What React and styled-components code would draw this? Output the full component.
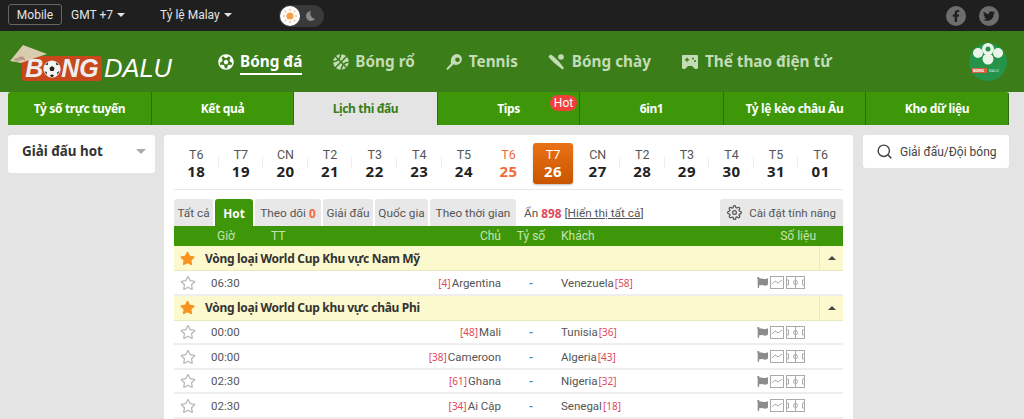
import React from 'react';
import styled, { createGlobalStyle } from 'styled-components';
import { FaFacebookF, FaTwitter, FaBasketballBall, FaFutbol, FaStar, FaRegStar, FaFlag } from 'react-icons/fa';
import { FiSearch, FiSettings } from 'react-icons/fi';

const FONT = 'Roboto, "Noto Sans", sans-serif';
const BOLD_FONT = '"Noto Sans", "DejaVu Sans", sans-serif';
const ROW_COLUMNS = '37px 60px 230px 60px 196px 86px';

const GlobalStyle = createGlobalStyle`
    html, body {
        margin: 0;
        padding: 0;
        background: #e4e4e4;
        font-family: ${FONT};
        overflow: hidden;
    }
    * {
        box-sizing: border-box;
    }
    b {
        font-family: ${BOLD_FONT};
    }
`;

const Page = styled.div`
    height: 419px;
    overflow: hidden;
    display: flex;
    flex-direction: column;
`;

const TopBar = styled.div`
    height: 31px;
    flex: none;
    background: #1f1f1f;
    display: flex;
    align-items: center;
    padding: 0 25px 2px 8px;
    color: #e4e4e4;
    font-size: 12px;
`;

const MobileButton = styled.div`
    width: 54px;
    height: 21px;
    border: 1px solid #666;
    border-radius: 3px;
    display: flex;
    align-items: center;
    justify-content: center;
    margin-right: 9px;
`;

const Dropdown = styled.div`
    display: flex;
    align-items: center;
    gap: 4px;
    width: ${(p) => p.width}px;
    white-space: nowrap;
`;

const Caret = styled.span`
    width: 0;
    height: 0;
    border-left: ${(p) => p.size || 4}px solid transparent;
    border-right: ${(p) => p.size || 4}px solid transparent;
    border-top: ${(p) => p.size || 4}px solid ${(p) => p.color || '#e4e4e4'};
    display: inline-block;
`;

const UpCaret = styled(Caret)`
    transform: rotate(180deg);
`;

const ThemeToggle = styled.div`
    width: 45px;
    height: 22px;
    border-radius: 11px;
    background: #3a3a3a;
    display: flex;
    align-items: center;
    padding: 0 1px;
    gap: 4px;
    margin-left: 49px;
    margin-top: 2px;
`;

const SunKnob = styled.div`
    width: 20px;
    height: 20px;
    border-radius: 50%;
    background: #fff;
    display: flex;
    align-items: center;
    justify-content: center;
`;

const Socials = styled.div`
    margin-left: auto;
    display: flex;
    gap: 13px;
    padding-top: 2px;
`;

const SocialIcon = styled.div`
    width: 20px;
    height: 20px;
    border-radius: 50%;
    background: #6d6d6d;
    color: #1f1f1f;
    display: flex;
    align-items: center;
    justify-content: center;
    font-size: 12px;
`;

const Header = styled.div`
    height: 61px;
    flex: none;
    background: #3a7d19;
    display: flex;
    align-items: center;
    padding: 0 17px 0 22px;
`;

const Logo = styled.div`
    position: relative;
    width: 150px;
    height: 25px;
    margin-top: 14px;
    margin-right: 46px;
    display: flex;
    align-items: center;
    font-size: 25.5px;
    font-style: italic;
    color: #fff;
    font-family: "Liberation Sans", sans-serif;
`;

const LogoBox = styled.div`
    width: 81px;
    height: 25px;
    background: #c9471c;
    border-radius: 3px;
    display: flex;
    align-items: center;
    justify-content: center;
    margin-right: 2px;
    color: #eee;
    font-size: 25px;
    font-weight: 700;
`;

const Hat = styled.svg`
    position: absolute;
    left: -13px;
    top: -12px;
`;

const SportNav = styled.div`
    display: flex;
    align-items: center;
    flex: 1;
`;

const SportItem = styled.div`
    display: flex;
    align-items: center;
    gap: 6px;
    margin-right: ${(p) => p.gap}px;
    color: ${(p) => (p.active ? '#fff' : '#c4dcb6')};
    font-family: ${BOLD_FONT};
    font-size: 15.3px;
    font-weight: 700;
    svg {
        font-size: 16px;
    }
`;

const SportLabel = styled.span`
    padding-bottom: 2px;
    border-bottom: 2px solid ${(p) => (p.active ? '#fff' : 'transparent')};
    margin-top: 3px;
`;

const Avatar = styled.svg`
    margin-top: 1px;
`;

const MainNav = styled.div`
    height: 33px;
    flex: none;
    margin: 0 15px 0 8px;
    display: grid;
    grid-template-columns: 144px 142px 144px 142px 144px 142px 143px;
    border-radius: 3px 3px 0 0;
    overflow: hidden;
`;

const MainNavItem = styled.div`
    position: relative;
    display: flex;
    align-items: center;
    justify-content: center;
    font-family: ${BOLD_FONT};
    font-size: 12px;
    letter-spacing: -0.35px;
    font-weight: 700;
    background: ${(p) => (p.active ? '#e4e4e4' : '#3d9708')};
    color: ${(p) => (p.active ? '#3a7d19' : '#fff')};
    border-right: 1px solid #2e6b14;
`;

const HotBadge = styled.span`
    position: absolute;
    right: 2px;
    top: 3px;
    width: 27px;
    height: 16px;
    border-radius: 8px;
    background: #f0403c;
    color: #fff;
    font-family: ${FONT};
    font-size: 12px;
    letter-spacing: 0;
    font-weight: 400;
    display: flex;
    align-items: center;
    justify-content: center;
`;

const Content = styled.div`
    flex: 1;
    padding: 10px 15px 0 8px;
    display: grid;
    grid-template-columns: 147px 689px 147px;
    gap: 9px;
    align-items: start;
`;

const LeaguePanel = styled.div`
    height: 38px;
    background: #fff;
    border-radius: 3px;
    display: flex;
    align-items: center;
    justify-content: space-between;
    padding: 0 9px 6px 14px;
    font-family: ${BOLD_FONT};
    font-size: 13.4px;
    font-weight: 700;
    color: #333;
`;

const MainPanel = styled.div`
    background: #fff;
    border-radius: 3px 3px 0 0;
    padding: 8px 10px 0;
    height: 300px;
`;

const SearchPanel = styled.div`
    height: 33px;
    margin-left: 1px;
    background: #fff;
    border-radius: 3px;
    display: flex;
    align-items: center;
    gap: 7px;
    padding: 0 13px;
    font-size: 12px;
    color: #444;
    white-space: nowrap;
    svg {
        font-size: 17px;
        flex: none;
    }
`;

const DateRow = styled.div`
    display: grid;
    grid-template-columns: repeat(15, 1fr);
    height: 47px;
    padding-bottom: 5px;
    border-bottom: 1px solid #e8e8e8;
`;

const DateItem = styled.div`
    position: relative;
    display: flex;
    flex-direction: column;
    align-items: center;
    justify-content: center;
    margin: 0 ${(p) => (p.active ? 2 : 0)}px;
    border-radius: 3px;
    font-size: 12.5px;
    line-height: 16px;
    color: ${(p) => (p.active ? '#fff' : p.weekend ? '#f26b38' : '#555')};
    background: ${(p) => (p.active ? 'linear-gradient(#ea7215, #c95500)' : 'transparent')};
    box-shadow: ${(p) => (p.active ? '0 1px 2px rgba(0, 0, 0, 0.25)' : 'none')};
    b {
        font-size: 15px;
        line-height: 17px;
        letter-spacing: 0.5px;
        color: ${(p) => (p.active ? '#fff' : p.weekend ? '#f26b38' : '#222')};
    }
    &::after {
        content: '';
        display: ${(p) => (p.noLine ? 'none' : 'block')};
        position: absolute;
        right: 0;
        top: 14px;
        width: 1px;
        height: 11px;
        background: #eee;
    }
`;

const Tabs = styled.div`
    display: flex;
    align-items: flex-end;
    gap: 2px;
    height: 27px;
    margin-top: 9px;
    font-size: 11.8px;
    color: #555;
`;

const Tab = styled.div`
    height: 27px;
    width: ${(p) => p.width}px;
    display: flex;
    align-items: center;
    justify-content: center;
    gap: 3px;
    background: ${(p) => (p.active ? '#3d9708' : '#e8e8e8')};
    color: ${(p) => (p.active ? '#fff' : '#555')};
    border-radius: 3px 3px 0 0;
    white-space: nowrap;
    b {
        color: ${(p) => (p.active ? '#fff' : '#f26b38')};
    }
`;

const HiddenInfo = styled.div`
    margin-left: 6px;
    display: flex;
    align-items: center;
    align-self: center;
    gap: 3px;
    b {
        color: #e0475a;
    }
    u {
        color: #555;
    }
`;

const SettingsButton = styled(Tab)`
    margin-left: auto;
    gap: 7px;
    font-size: 11.5px;
    svg {
        font-size: 15px;
    }
`;

const TableHead = styled.div`
    display: grid;
    grid-template-columns: ${ROW_COLUMNS};
    height: 20px;
    align-items: center;
    background: #3d9708;
    color: #c7e3b4;
    font-size: 12px;
`;

const HeadTime = styled.span`
    grid-column: 1 / 3;
    padding-left: 43px;
`;

const HeadHome = styled.span`
    display: flex;
    justify-content: space-between;
`;

const HeadScore = styled.span`
    text-align: center;
`;

const HeadStats = styled.span`
    grid-column: 5 / 7;
    display: flex;
    justify-content: space-between;
    padding-right: 27px;
`;

const LeagueRow = styled.div`
    height: 25px;
    background: #fbf9cd;
    border-bottom: 1px solid #e9e8c0;
    display: flex;
    align-items: center;
    color: #333;
    font-family: ${BOLD_FONT};
    font-size: 12px;
    letter-spacing: -0.3px;
    font-weight: 700;
`;

const LeagueStar = styled.span`
    width: 31px;
    padding-left: 6px;
    color: #f7931e;
    font-size: 15px;
    display: flex;
`;

const Collapse = styled.span`
    margin-left: auto;
    width: 24px;
    height: 24px;
    border-left: 1px solid #ebe9c4;
    display: flex;
    align-items: center;
    justify-content: center;
`;

const MatchRow = styled.div`
    display: grid;
    grid-template-columns: ${ROW_COLUMNS};
    height: 24.5px;
    align-items: center;
    padding-top: 1px;
    border-bottom: 2px solid #eee;
    font-size: 11.5px;
    color: #555;
`;

const StarCell = styled.span`
    padding-left: 6px;
    color: #bbb;
    font-size: 16px;
    display: flex;
`;

const Home = styled.span`
    text-align: right;
`;

const Rank = styled.span`
    color: #e0475a;
    font-family: ${BOLD_FONT};
    font-size: 10px;
    margin: 0 1px;
`;

const Score = styled.span`
    text-align: center;
    color: #3b8fd0;
    font-weight: 700;
`;

const Stats = styled.span`
    display: flex;
    align-items: center;
    gap: 2px;
    color: #8c8c8c;
`;

const StatBox = styled.svg`
    display: block;
`;

const dates = [
    ['T6', '18'], ['T7', '19'], ['CN', '20'], ['T2', '21'], ['T3', '22'], ['T4', '23'], ['T5', '24'],
    ['T6', '25', 'weekend'], ['T7', '26', 'active'], ['CN', '27'], ['T2', '28'], ['T3', '29'], ['T4', '30'], ['T5', '31'], ['T6', '01']
];

const groups = [
    {
        name: 'Vòng loại World Cup Khu vực Nam Mỹ',
        matches: [['06:30', '4', 'Argentina', 'Venezuela', '58']]
    },
    {
        name: 'Vòng loại World Cup khu vực châu Phi',
        matches: [
            ['00:00', '48', 'Mali', 'Tunisia', '36'],
            ['00:00', '38', 'Cameroon', 'Algeria', '43'],
            ['02:30', '61', 'Ghana', 'Nigeria', '32'],
            ['02:30', '34', 'Ai Cập', 'Senegal', '18']
        ]
    }
];

const TennisIcon = () => (
    <svg width="17" height="16" viewBox="0 0 17 16" fill="currentColor">
        <path fillRule="evenodd" d="M11 0a6 6 0 0 1 5 5c0 3-3 6-6 6a4 4 0 0 1-2.400-.7L3 14.800 1.500 16 .3 14.800 5 9.400A5 5 0 0 1 5 6c0-3 3-6 6-6zM11.500 3.500a2.300 2.300 0 1 0 0 4.600 2.300 2.300 0 0 0 0-4.600z" />
    </svg>
);

const BaseballIcon = () => (
    <svg width="18" height="16" viewBox="0 0 18 16" fill="currentColor">
        <path d="M.5 2.500L2.500.5c1 0 6 4.500 8 6.500l5.500 7-1.500 1.500-7-5.500C5.500 8 .5 3.500.5 2.500z" />
        <circle cx="13" cy="3" r="2.800" />
    </svg>
);

const GameIcon = () => (
    <svg width="18" height="16" viewBox="0 0 18 16" fill="currentColor">
        <path d="M2 1h14a1 1 0 0 1 1 1v12l-1 1h-2l-3-3H7l-3 3H2l-1-1V2a1 1 0 0 1 1-1z" />
        <rect x="4" y="5" width="4" height="1.400" fill="#3a7d19" />
        <rect x="5.300" y="3.700" width="1.400" height="4" fill="#3a7d19" />
        <circle cx="12" cy="4.600" r="1" fill="#3a7d19" />
        <circle cx="14" cy="7" r="1" fill="#3a7d19" />
    </svg>
);

const Ball = () => (
    <svg width="18" height="18" viewBox="0 0 24 24">
        <circle cx="12" cy="12" r="11.500" fill="#f4f4f4" />
        <path d="M12 8l3.500 2.500-1.300 4h-4.400l-1.300-4z M3 6l3 1 1-4zM21 6l-3 1-1-4zM2 15l3 1 0 4zM22 15l-3 1 0 4zM9 21l3-2 3 2-3 2z" fill="#222" />
    </svg>
);

const ChartIcon = () => (
    <StatBox width="14" height="13" viewBox="0 0 14 13" fill="none" stroke="#aaa">
        <rect x="0.5" y="0.5" width="13" height="12" />
        <path d="M2 8l3-3 3 2 4-3" />
    </StatBox>
);

const PitchIcon = () => (
    <StatBox width="19" height="13" viewBox="0 0 19 13" fill="none" stroke="#aaa">
        <rect x="0.5" y="0.5" width="18" height="12" />
        <path d="M.5 4h2v5h-2M18.500 4h-2v5h2M9.500 .5v12" />
        <circle cx="9.500" cy="6.500" r="2" />
    </StatBox>
);

export default function App() {
    return (
        <Page>
            <GlobalStyle />
            <TopBar>
                <MobileButton>Mobile</MobileButton>
                <Dropdown width={89}>GMT +7 <Caret /></Dropdown>
                <Dropdown width={70}>Tỷ lệ Malay <Caret /></Dropdown>
                <ThemeToggle>
                    <SunKnob>
                        <svg width="14" height="14" viewBox="0 0 14 14" fill="#f5a04a">
                            <circle cx="7" cy="7" r="3.600" />
                            <path d="M6.500 0h1v2h-1zM6.500 12h1v2h-1zM0 6.500h2v1H0zM12 6.500h2v1h-2zM2 1.400l1.400 1.400-.6.6L1.400 2zM11.200 10.600l1.400 1.400-.6.6-1.400-1.400zM12.600 2l-1.400 1.400-.6-.6L12 1.400zM3.400 11.200L2 12.600l-.6-.6 1.400-1.400z" />
                        </svg>
                    </SunKnob>
                    <svg width="12" height="12" viewBox="0 0 12 12" fill="#8a8a8a">
                        <path d="M7 1a5 5 0 1 0 4 8A5.500 5.500 0 0 1 7 1z" />
                    </svg>
                </ThemeToggle>
                <Socials>
                    <SocialIcon><FaFacebookF /></SocialIcon>
                    <SocialIcon><FaTwitter /></SocialIcon>
                </Socials>
            </TopBar>
            <Header>
                <Logo>
                    <Hat width="40" height="20" viewBox="0 0 40 20">
                        <path d="M14 1L38 10 26 14 12 19 1 17z" fill="#d9cdb0" />
                        <path d="M4 15l10-3 2 3-9 3z" fill="#b5a78a" />
                        <path d="M10 13l6 3" stroke="#d9668a" strokeWidth="1" />
                    </Hat>
                    <LogoBox>B<Ball />NG</LogoBox>
                    DALU
                </Logo>
                <SportNav>
                    <SportItem active gap={31}><FaFutbol /><SportLabel active>Bóng đá</SportLabel></SportItem>
                    <SportItem gap={31}><FaBasketballBall /><SportLabel>Bóng rổ</SportLabel></SportItem>
                    <SportItem gap={30}><TennisIcon /><SportLabel>Tennis</SportLabel></SportItem>
                    <SportItem gap={30}><BaseballIcon /><SportLabel>Bóng chày</SportLabel></SportItem>
                    <SportItem gap={0}><GameIcon /><SportLabel>Thể thao điện tử</SportLabel></SportItem>
                </SportNav>
                <Avatar width="38" height="38" viewBox="0 0 38 38">
                    <circle cx="19" cy="19" r="19" fill="#25934a" />
                    <circle cx="19" cy="6" r="6" fill="#eaf5ea" />
                    <circle cx="9" cy="10" r="5" fill="#eaf5ea" />
                    <circle cx="29" cy="10" r="5" fill="#eaf5ea" />
                    <circle cx="19" cy="16" r="5.500" fill="#eaf5ea" />
                    <circle cx="19" cy="6" r="2.500" fill="#25934a" />
                    <rect x="3" y="25" width="15" height="5" fill="#d9603e" />
                    <text x="4" y="29.400" fontSize="4" fill="#fff" fontWeight="700">BONG</text>
                    <text x="20" y="29.400" fontSize="4" fill="#dff0df">DALU</text>
                </Avatar>
            </Header>
            <MainNav>
                <MainNavItem>Tỷ số trực tuyến</MainNavItem>
                <MainNavItem>Kết quả</MainNavItem>
                <MainNavItem active>Lịch thi đấu</MainNavItem>
                <MainNavItem>Tips<HotBadge>Hot</HotBadge></MainNavItem>
                <MainNavItem>6in1</MainNavItem>
                <MainNavItem>Tỷ lệ kèo châu Âu</MainNavItem>
                <MainNavItem>Kho dữ liệu</MainNavItem>
            </MainNav>
            <Content>
                <LeaguePanel>Giải đấu hot <Caret color="#aaa" size={5} /></LeaguePanel>
                <MainPanel>
                    <DateRow>
                        {dates.map(([day, num, kind], i) => (
                            <DateItem
                                key={day + num}
                                active={kind === 'active'}
                                weekend={kind === 'weekend'}
                                noLine={kind || i === 14 || dates[i + 1][2] === 'weekend'}
                            >
                                {day}<b>{num}</b>
                            </DateItem>
                        ))}
                    </DateRow>
                    <Tabs>
                        <Tab width={39}>Tất cả</Tab>
                        <Tab width={38} active><b>Hot</b></Tab>
                        <Tab width={66}>Theo dõi <b>0</b></Tab>
                        <Tab width={50}>Giải đấu</Tab>
                        <Tab width={53}>Quốc gia</Tab>
                        <Tab width={86}>Theo thời gian</Tab>
                        <HiddenInfo>Ẩn <b>898</b> <span>[<u>Hiển thị tất cả</u>]</span></HiddenInfo>
                        <SettingsButton width={123}><FiSettings /> Cài đặt tính năng</SettingsButton>
                    </Tabs>
                    <TableHead>
                        <HeadTime>Giờ</HeadTime>
                        <HeadHome><span>TT</span><span>Chủ</span></HeadHome>
                        <HeadScore>Tỷ số</HeadScore>
                        <HeadStats><span>Khách</span><span>Số liệu</span></HeadStats>
                    </TableHead>
                    {groups.map((group) => (
                        <React.Fragment key={group.name}>
                            <LeagueRow>
                                <LeagueStar><FaStar /></LeagueStar>
                                {group.name}
                                <Collapse><UpCaret color="#444" /></Collapse>
                            </LeagueRow>
                            {group.matches.map(([time, homeRank, home, away, awayRank]) => (
                                <MatchRow key={home}>
                                    <StarCell><FaRegStar /></StarCell>
                                    <span>{time}</span>
                                    <Home><Rank>[{homeRank}]</Rank>{home}</Home>
                                    <Score>-</Score>
                                    <span>{away}<Rank>[{awayRank}]</Rank></span>
                                    <Stats><FaFlag size={11} /><ChartIcon /><PitchIcon /></Stats>
                                </MatchRow>
                            ))}
                        </React.Fragment>
                    ))}
                </MainPanel>
                <SearchPanel><FiSearch /> Giải đấu/Đội bóng</SearchPanel>
            </Content>
        </Page>
    );
}
